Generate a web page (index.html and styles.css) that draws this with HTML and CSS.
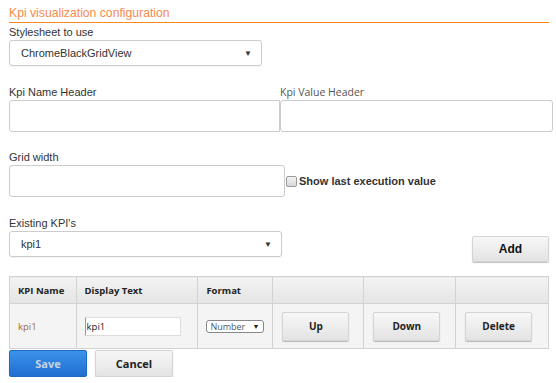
FILE: index.html
```html
<!DOCTYPE html>
<html>
<head>
<meta charset="utf-8">
<link rel="stylesheet" href="styles.css">
</head>
<body>
<div class="page">
  <h1 class="title">Kpi visualization configuration</h1>
  <div class="field">
    <label class="lbl">Stylesheet to use</label>
    <div class="select sel-style"><span>ChromeBlackGridView</span><span class="arrow">&#9660;</span></div>
  </div>
  <div class="row headers">
    <div class="field half">
      <label class="lbl">Kpi Name Header</label>
      <div class="input in-name"></div>
    </div>
    <div class="field half">
      <label class="lbl alt">Kpi Value Header</label>
      <div class="input in-value"></div>
    </div>
  </div>
  <div class="field gridw">
    <label class="lbl">Grid width</label>
    <div class="row center">
      <div class="input in-grid"></div>
      <span class="check"></span><span class="checklbl">Show last execution value</span>
    </div>
  </div>
  <div class="row existing">
    <div class="field">
      <label class="lbl">Existing KPI's</label>
      <div class="select sel-kpi"><span>kpi1</span><span class="arrow">&#9660;</span></div>
    </div>
    <button class="btn add">Add</button>
  </div>
  <table class="grid">
    <thead>
      <tr><th class="c1">KPI Name</th><th class="c2">Display Text</th><th class="c3">Format</th><th class="c4"></th><th class="c5"></th><th class="c6"></th></tr>
    </thead>
    <tbody>
      <tr>
        <td class="name">kpi1</td>
        <td><div class="cellinput">kpi1</div></td>
        <td><div class="minisel">Number <span class="miniarrow">&#9660;</span></div></td>
        <td><button class="btn cellbtn">Up</button></td>
        <td><button class="btn cellbtn">Down</button></td>
        <td><button class="btn cellbtn">Delete</button></td>
      </tr>
    </tbody>
  </table>
  <div class="row actions">
    <button class="btn save">Save</button>
    <button class="btn cancel">Cancel</button>
  </div>
</div>
</body>
</html>
```

FILE: styles.css
```css
* { box-sizing: border-box; }
html, body { margin: 0; padding: 0; background: #fff; }
body { font-family: "Liberation Sans", Arial, sans-serif; color: #333; }
.page { padding: 5px 3px 0 9px; width: 556px; }
.title {
  margin: 0 4px 0 0;
  font-weight: normal;
  font-size: 12.2px;
  line-height: 16px;
  color: #f58a4e;
  border-bottom: 1px solid #f7861f;
  padding-bottom: 1px;
}
.field { display: flex; flex-direction: column; }
.lbl { font-size: 11px; line-height: 14px; color: #333; }
.lbl.alt { font-family: "Open Sans", sans-serif; font-size: 10.5px; color: #555; }
.field > .lbl { padding-top: 2px; padding-bottom: 1px; }
.select {
  display: flex; align-items: center; justify-content: space-between;
  height: 26px; border: 1px solid #ccc; border-radius: 3px;
  padding: 0 9px 0 11px; font-size: 11px; color: #333;
  box-shadow: 0 1px 1px rgba(0,0,0,0.05);
}
.sel-style { width: 253px; }
.arrow { font-size: 8px; color: #333; }
.row { display: flex; }
.headers { margin-top: 17px; }
.headers .half:first-child { width: 271px; }
.headers .half:last-child { flex: 1; }
.input { height: 32px; border: 1px solid #ccc; border-radius: 3px; background: #fff; }
.in-name { border-radius: 3px 0 0 3px; }
.gridw { margin-top: 16px; }
.in-grid { width: 276px; }
.center { align-items: center; }
.check {
  width: 11px; height: 11px; border: 1px solid #999; border-radius: 2px;
  background: linear-gradient(#f4f4f4, #d8d8d8); margin-left: 1px; margin-right: 2px;
}
.checklbl { font-weight: bold; font-size: 11px; color: #333; }
.existing { margin-top: 17px; align-items: flex-end; justify-content: space-between; width: 540px; }
.sel-kpi { width: 273px; }
.btn {
  font-family: "Open Sans", sans-serif; font-weight: bold; font-size: 10px;
  color: #222; border: 1px solid #d4d4d4; border-radius: 2px;
  background: linear-gradient(#f7f7f7, #e3e3e3);
  box-shadow: 0 1px 1px rgba(0,0,0,0.25);
  padding: 0; cursor: pointer;
}
.add { width: 77px; height: 26px; margin-bottom: -5px; font-family: "Liberation Sans", Arial, sans-serif; font-size: 12px; color: #111; }
.grid {
  margin-top: 19px; width: 540px; border-collapse: collapse;
  font-family: "Open Sans", sans-serif; font-size: 9.5px; color: #333;
}
.grid th, .grid td { border: 1px solid #d2d2d2; padding: 0 8px; text-align: left; }
.grid th { height: 27px; background: linear-gradient(#f3f3f3, #e4e4e4); font-weight: bold; color: #222; }
.grid td { height: 45px; background: #f4f4f4; }
.c1 { width: 67px; } .c2 { width: 122px; } .c3 { width: 75px; }
.c4 { width: 91px; } .c5 { width: 92px; } .c6 { width: 93px; }
.name { color: #9c6b2e; }
.cellinput {
  width: 96px; height: 19px; background: #fff; border: 1px solid #ddd;
  border-left: 1px solid #999; font-size: 9.5px; line-height: 17px; color: #222; padding-left: 1px;
}
.minisel {
  display: inline-flex; align-items: center; justify-content: space-between;
  width: 58px; height: 13px; border: 1px solid #888; border-radius: 3px;
  background: #fff; font-size: 9px; padding: 0 4px 0 3px; color: #4a5a6a;
}
.miniarrow { font-size: 7px; color: #222; }
.cellbtn { width: 67px; height: 29px; display: block; margin-left: 1px; }
.actions { margin-top: 1px; gap: 8px; }
.save {
  width: 78px; height: 27px; border: 1px solid #1e6bc5; border-radius: 2px;
  background: linear-gradient(#3b92e8, #1f6fd1); color: #c9d4e3; font-size: 11px;
}
.cancel { width: 78px; height: 27px; font-size: 11px; }
```
